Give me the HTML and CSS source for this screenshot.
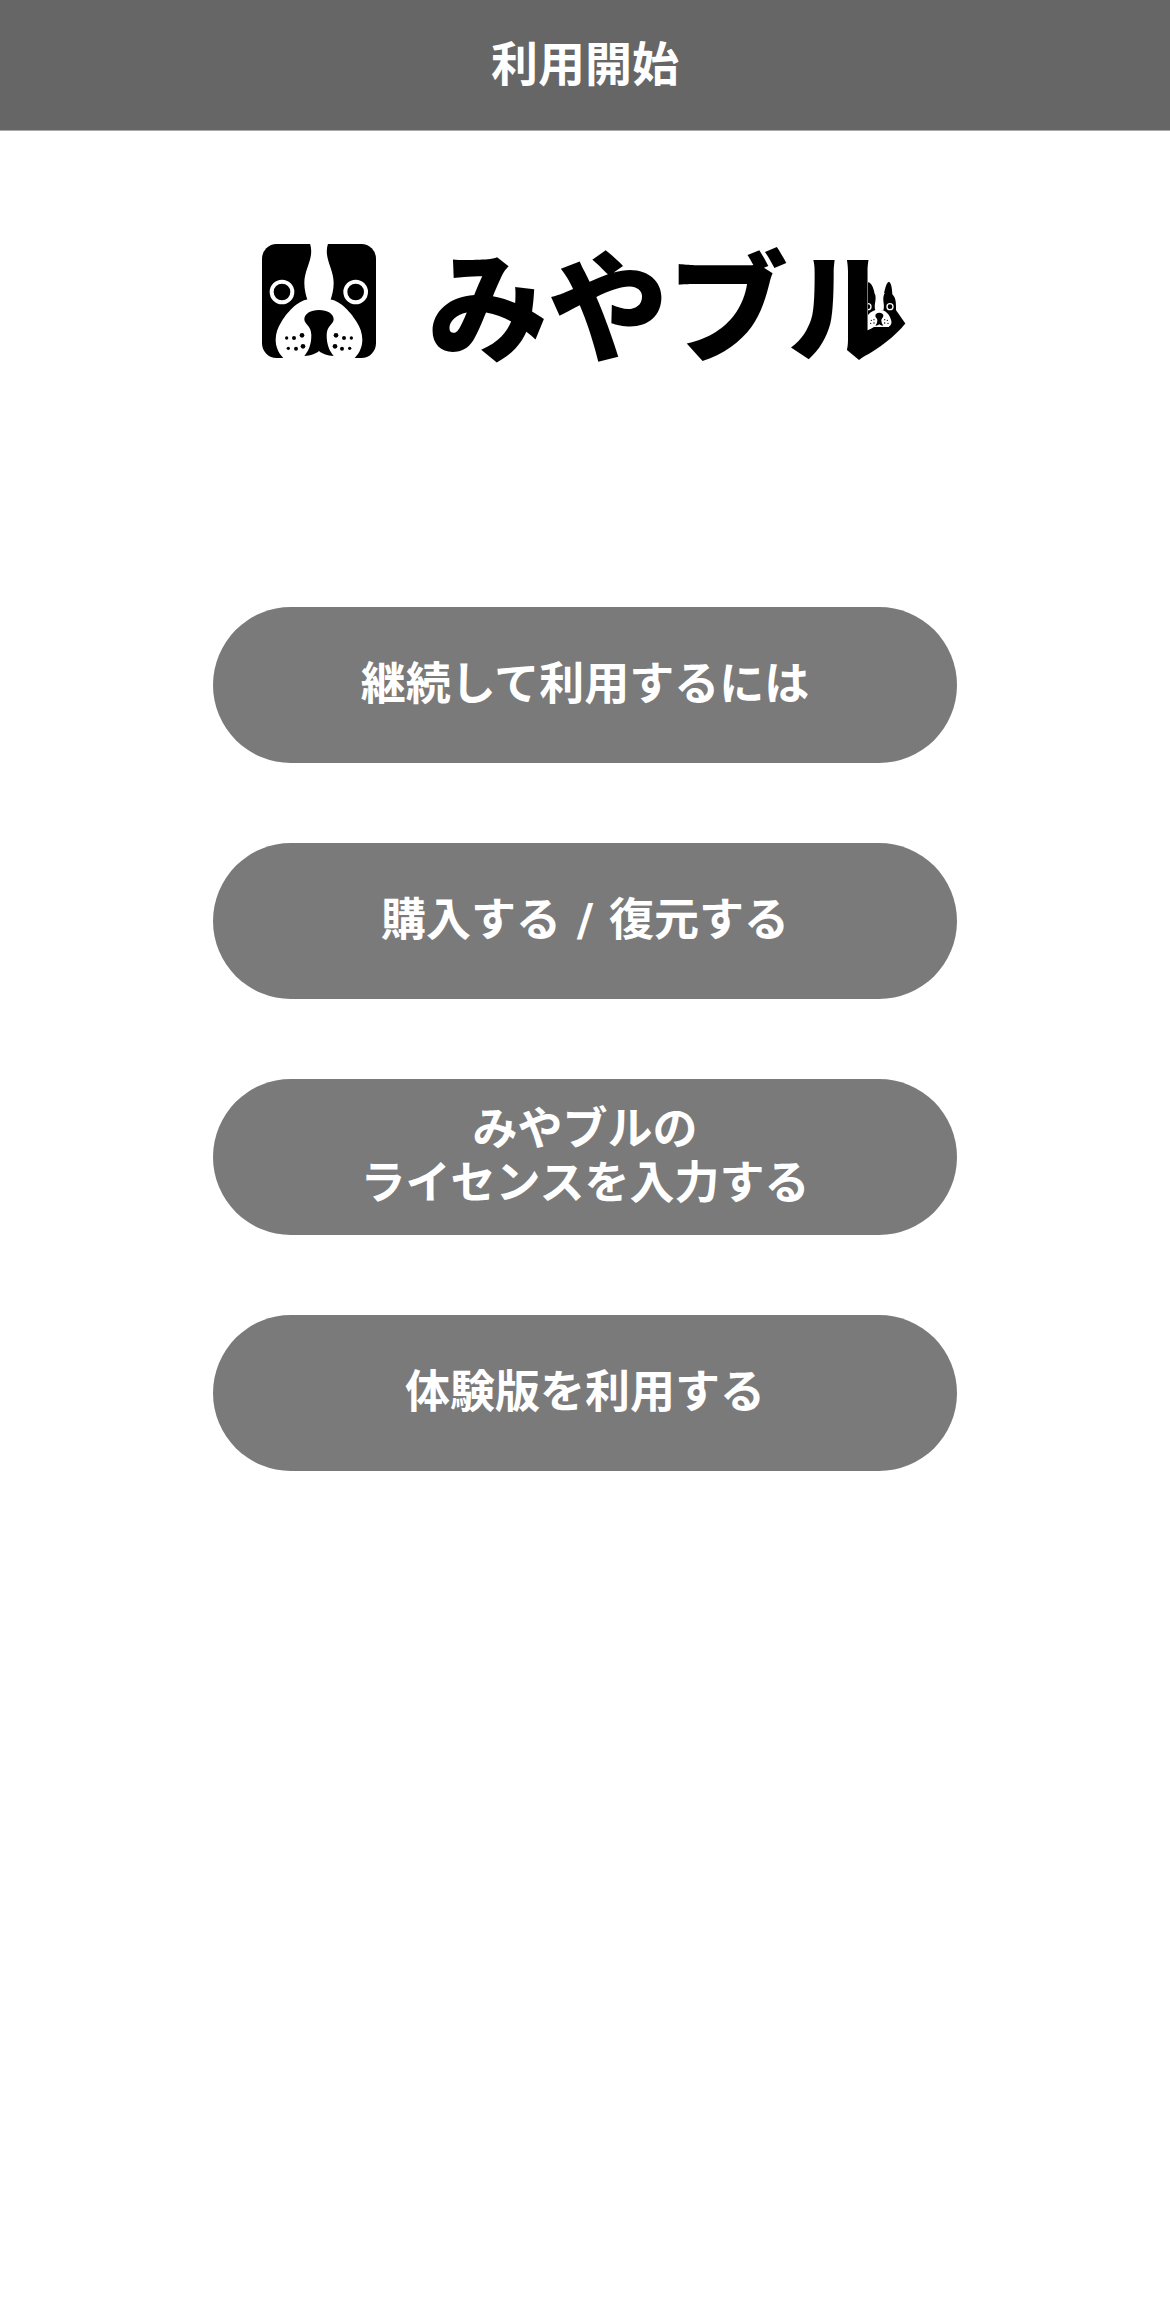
FILE: index.html
```html
<!DOCTYPE html>
<html lang="ja">
<head>
    <meta charset="UTF-8">
    <meta name="viewport" content="width=device-width, initial-scale=1.0">
    <title>みやブル</title>
    <link rel="stylesheet" href="styles.css">
</head>
<body>
    <header class="header">
        <h1>利用開始</h1>
    </header>

    <main class="container">
        <div class="logo">
            <svg class="logo-mark" viewBox="36 42 342 342" aria-hidden="true">
                <rect x="36" y="42" width="342" height="342" rx="44" fill="#000"/>
                <!-- blaze -->
                <path d="M180 41 C194 85 163 115 163 159 C163 180 168 196 173 212 L241 212 C246 196 251 180 251 159 C251 115 220 85 234 41 Z" fill="#fff"/>
                <!-- muzzle -->
                <path d="M102 386 C66 352 74 306 94 276 C115 242 148 208 180 208 L234 208 C266 208 299 242 320 276 C340 306 348 352 312 386 Z" fill="#fff"/>
                <!-- nose and mouth -->
                <path d="M207 240 C232 240 251 251 251 268 C251 284 230 286 230 316 C230 345 239 364 251 378 C231 376 219 373 207 363 C195 373 183 376 163 378 C175 364 184 345 184 316 C184 286 163 284 163 268 C163 251 182 240 207 240 Z" fill="#000"/>
                <g fill="#000" stroke="#fff" stroke-width="12">
                    <circle cx="96" cy="186" r="31"/>
                    <circle cx="317" cy="186" r="31"/>
                </g>
                <g fill="#000">
                    <circle cx="156" cy="316" r="7"/><circle cx="132" cy="324" r="6"/><circle cx="110" cy="324" r="5"/>
                    <circle cx="159" cy="349" r="7"/><circle cx="138" cy="356" r="6"/><circle cx="115" cy="355" r="5"/>
                    <circle cx="258" cy="316" r="7"/><circle cx="282" cy="324" r="6"/><circle cx="304" cy="324" r="5"/>
                    <circle cx="255" cy="349" r="7"/><circle cx="276" cy="356" r="6"/><circle cx="299" cy="355" r="5"/>
                </g>
            </svg>
            <div class="logo-name">
                <span>みやブル</span>
                <svg class="logo-puppy" viewBox="0 0 84 138" aria-hidden="true">
                    <path d="M0 138 L0 4 C10 4 16 20 20 38 L48 38 C52 18 56 4 63 2 C70 6 72 22 73 40 C82 50 84 60 84 76 L84 108 C82 124 74 138 64 138 Z" fill="#000"/>
                    <path d="M20 36 C28 56 16 70 22 88 L46 88 C52 70 40 56 50 36 Z" fill="#fff"/>
                    <path d="M0 138 L0 102 C8 92 18 86 34 86 C52 86 66 100 70 120 C72 130 66 134 62 138 Z" fill="#fff"/>
                    <path d="M34 95 C42 95 46 99 46 104 C46 109 40 112 40 118 C40 126 43 130 46 134 C40 134 37 132 34 130 C31 132 28 134 22 134 C25 130 28 126 28 118 C28 112 22 109 22 104 C22 99 26 95 34 95 Z" fill="#000"/>
                    <path d="M0 68 A9 9 0 0 1 0 86" fill="none" stroke="#fff" stroke-width="4"/>
                    <circle cx="66" cy="77" r="9" fill="#000" stroke="#fff" stroke-width="4"/>
                    <g fill="#000">
                        <circle cx="18" cy="116" r="2"/><circle cx="10" cy="118" r="2"/><circle cx="18" cy="126" r="2"/><circle cx="8" cy="127" r="2"/>
                        <circle cx="50" cy="116" r="2"/><circle cx="58" cy="118" r="2"/><circle cx="50" cy="126" r="2"/><circle cx="60" cy="127" r="2"/>
                    </g>
                </svg>
            </div>
        </div>

        <div class="menu">
            <button type="button">継続して利用するには</button>
            <button type="button">購入する / 復元する</button>
            <button type="button">みやブルの<br>ライセンスを入力する</button>
            <button type="button">体験版を利用する</button>
        </div>
    </main>
</body>
</html>
```
FILE: styles.css
```css
* { margin: 0; padding: 0; box-sizing: border-box; }
body {
    background: #fff;
    font-family: "DejaVu Sans", "Noto Sans CJK JP", sans-serif;
}
.header {
    display: flex;
    align-items: center;
    justify-content: center;
    height: 131px;
    background: #666;
    border-bottom: 1px solid #aaa;
    color: #fff;
}
.header h1 {
    font-size: 47px;
    font-weight: 700;
    line-height: 56px;
}
.container {
    display: flex;
    flex-direction: column;
    align-items: center;
    padding-top: 112px;
}
.logo {
    display: flex;
    align-items: center;
    gap: 52px;
}
.logo-mark {
    width: 114px;
    height: 114px;
}
.logo-name {
    position: relative;
    font-family: "Noto Sans CJK JP", sans-serif;
    font-size: 120px;
    font-weight: 900;
    line-height: 116px;
    color: #000;
}
.logo-puppy {
    position: absolute;
    right: 12px;
    bottom: 32px;
    width: 28px;
    height: 46px;
}
.menu {
    display: flex;
    flex-direction: column;
    gap: 80px;
    width: 64%;
    max-width: 744px;
    margin-top: 248px;
}
.menu button {
    min-height: 156px;
    background: #7a7a7a;
    border: none;
    border-radius: 78px;
    color: #fff;
    font-family: inherit;
    font-size: 45px;
    font-weight: 700;
    line-height: 54px;
    cursor: pointer;
}
```
